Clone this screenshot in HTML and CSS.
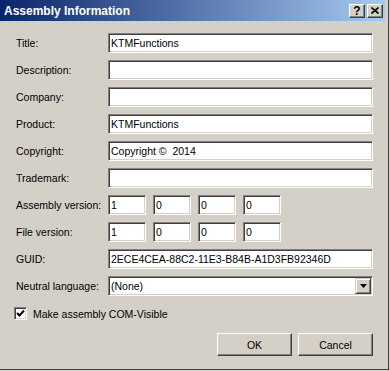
FILE: index.html
```html
<!DOCTYPE html>
<html>
<head>
    <title>Assembly Information</title>
    <meta name="viewport" content="width=device-width, initial-scale=1.0">
    <link rel="stylesheet" href="styles.css">
</head>
<body>
    <div class="window">
        <div class="titlebar">
            <span class="title">Assembly Information</span>
            <div class="caption-buttons">
                <div class="cap-btn help">?</div>
                <div class="cap-btn close">
                    <svg width="8" height="7" viewBox="0 0 8 7">
                        <path d="M0.5 0.5 L7.5 6.5 M7.5 0.5 L0.5 6.5" stroke="#000" stroke-width="1.6" fill="none"/>
                    </svg>
                </div>
            </div>
        </div>
        <div class="client">
            <div class="form">
                <label>Title:</label>
                <div class="edit">KTMFunctions</div>

                <label>Description:</label>
                <div class="edit"></div>

                <label>Company:</label>
                <div class="edit"></div>

                <label>Product:</label>
                <div class="edit">KTMFunctions</div>

                <label>Copyright:</label>
                <div class="edit">Copyright ©&nbsp; 2014</div>

                <label>Trademark:</label>
                <div class="edit"></div>

                <label>Assembly version:</label>
                <div class="versions">
                    <div class="edit small">1</div>
                    <div class="edit small">0</div>
                    <div class="edit small">0</div>
                    <div class="edit small">0</div>
                </div>

                <label>File version:</label>
                <div class="versions">
                    <div class="edit small">1</div>
                    <div class="edit small">0</div>
                    <div class="edit small">0</div>
                    <div class="edit small">0</div>
                </div>

                <label>GUID:</label>
                <div class="edit">2ECE4CEA-88C2-11E3-B84B-A1D3FB92346D</div>

                <label>Neutral language:</label>
                <div class="edit combo">
                    <span class="combo-text">(None)</span>
                    <span class="drop">
                        <svg width="7" height="4" viewBox="0 0 7 4">
                            <path d="M0 0 H7 L3.5 4 Z" fill="#000"/>
                        </svg>
                    </span>
                </div>
            </div>

            <div class="check-row">
                <span class="checkbox">
                    <svg width="9" height="9" viewBox="0 0 9 9">
                        <path d="M1 4 L3.5 6.5 L8 1.5" stroke="#000" stroke-width="2" fill="none"/>
                    </svg>
                </span>
                <span>Make assembly COM-Visible</span>
            </div>

            <div class="buttons">
                <div class="button">OK</div>
                <div class="button">Cancel</div>
            </div>
        </div>
    </div>
</body>
</html>
```

FILE: styles.css
```css
:root {
    --face: #d4d0c8;
    --shadow: #808080;
    --dark: #404040;
    --light: #ffffff;
}

body {
    margin: 0;
    background: var(--face);
    font-family: 'Liberation Sans', Arial, sans-serif;
    font-size: 10.5px;
    color: #000;
}

.window {
    width: 389px;
    height: 370px;
    box-sizing: border-box;
    background: var(--face);
    border-right: 1px solid var(--dark);
    border-bottom: 1px solid var(--dark);
}

.titlebar {
    width: 385px;
    height: 21px;
    box-sizing: border-box;
    padding: 0 2px 0 4px;
    display: flex;
    align-items: center;
    justify-content: space-between;
    background: linear-gradient(to right, #0a246a, #a6caf0);
}

.title {
    color: #fff;
    font-weight: bold;
    font-size: 12px;
}

.caption-buttons {
    display: flex;
    gap: 2px;
}

.cap-btn {
    width: 16px;
    height: 14px;
    box-sizing: border-box;
    background: var(--face);
    border: 1px solid;
    border-color: var(--light) var(--dark) var(--dark) var(--light);
    box-shadow: inset -1px -1px var(--shadow);
    display: flex;
    align-items: center;
    justify-content: center;
}

.help {
    font-weight: bold;
    font-size: 12px;
    line-height: 1;
}

.client {
    padding: 12px 0 0 14px;
    width: 373px;
    box-sizing: border-box;
}

.form {
    margin-left: 2px;
    display: grid;
    grid-template-columns: 92px 265px;
    row-gap: 7px;
}

.form label {
    align-self: center;
}

.edit {
    height: 20px;
    box-sizing: border-box;
    background: #fff;
    border: 1px solid;
    border-color: var(--shadow) var(--light) var(--light) var(--shadow);
    box-shadow: inset 1px 1px var(--dark), inset -1px -1px var(--face);
    padding: 0 2px;
    line-height: 18px;
    white-space: nowrap;
}

.versions {
    display: flex;
    gap: 7px;
}

.edit.small {
    width: 38px;
}

.combo {
    display: flex;
    align-items: stretch;
    padding: 1px 1px 1px 2px;
    line-height: 16px;
}

.combo-text {
    flex: 1;
}

.drop {
    width: 16px;
    box-sizing: border-box;
    background: var(--face);
    border: 1px solid;
    border-color: var(--face) var(--dark) var(--dark) var(--face);
    box-shadow: inset 1px 1px var(--light), inset -1px -1px var(--shadow);
    display: flex;
    align-items: center;
    justify-content: center;
}

.check-row {
    margin-top: 11px;
    height: 13px;
    display: flex;
    align-items: center;
    gap: 6px;
}

.checkbox {
    width: 13px;
    height: 13px;
    box-sizing: border-box;
    background: #fff;
    border: 1px solid;
    border-color: var(--shadow) var(--light) var(--light) var(--shadow);
    box-shadow: inset 1px 1px var(--dark), inset -1px -1px var(--face);
    display: flex;
    align-items: center;
    justify-content: center;
}

.buttons {
    margin-top: 13px;
    display: flex;
    justify-content: flex-end;
    gap: 6px;
}

.button {
    width: 75px;
    height: 23px;
    box-sizing: border-box;
    border: 1px solid;
    border-color: var(--light) var(--dark) var(--dark) var(--light);
    box-shadow: inset -1px -1px var(--shadow);
    display: flex;
    align-items: center;
    justify-content: center;
}
```
